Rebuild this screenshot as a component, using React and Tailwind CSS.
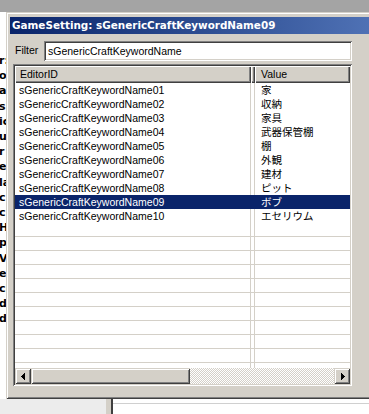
import React from "react";

const rows = [
  { id: "sGenericCraftKeywordName01", value: "家" },
  { id: "sGenericCraftKeywordName02", value: "収納" },
  { id: "sGenericCraftKeywordName03", value: "家具" },
  { id: "sGenericCraftKeywordName04", value: "武器保管棚" },
  { id: "sGenericCraftKeywordName05", value: "棚" },
  { id: "sGenericCraftKeywordName06", value: "外観" },
  { id: "sGenericCraftKeywordName07", value: "建材" },
  { id: "sGenericCraftKeywordName08", value: "ピット" },
  { id: "sGenericCraftKeywordName09", value: "ボブ", selected: true },
  { id: "sGenericCraftKeywordName10", value: "エセリウム" },
];

const sideLetters = ["r:", "o", "a", "s", "ic", "u", "r", "e", "la", "c", "c", "H", "p", "V", "e", "ci", "d", "d"];

const raised =
  "shadow-[inset_1px_1px_0_#d4d0c8,inset_-1px_-1px_0_#404040,inset_2px_2px_0_#ffffff,inset_-2px_-2px_0_#808080]";
const sunken =
  "shadow-[inset_1px_1px_0_#808080,inset_-1px_-1px_0_#ffffff,inset_2px_2px_0_#404040,inset_-2px_-2px_0_#d4d0c8]";
const headerCell =
  "shadow-[inset_1px_1px_0_#ffffff,inset_-1px_-1px_0_#404040,inset_-2px_-2px_0_#808080]";

const ArrowLeft = () => (
  <svg width="4" height="7" viewBox="0 0 4 7" shapeRendering="crispEdges">
    <path d="M3 0h1v7h-1zM2 1h1v5h-1zM1 2h1v3h-1zM0 3h1v1h-1z" fill="#000" />
  </svg>
);

const ArrowRight = () => (
  <svg width="4" height="7" viewBox="0 0 4 7" shapeRendering="crispEdges">
    <path d="M0 0h1v7h-1zM1 1h1v5h-1zM2 2h1v3h-1zM3 3h1v1h-1z" fill="#000" />
  </svg>
);

export default function App() {
  return (
    <div className="relative w-[369px] h-[414px] overflow-hidden bg-white font-['Liberation_Sans','Noto_Sans_CJK_JP',Arial,sans-serif]">
      {/* window behind the dialog */}
      <div className="flex flex-col h-full">
        <div className="h-[12px] bg-[#a4a4a4]" />
        <div className="flex-1 bg-white pt-[41px]">
          <div className="flex flex-col font-['DejaVu_Sans',sans-serif] font-bold text-[11px] leading-[15.2px] text-black">
            {sideLetters.map((l, i) => (
              <span key={i} className="-ml-[1px]">
                {l}
              </span>
            ))}
          </div>
        </div>
        <div className="h-[15px] flex">
          <div className="w-[106px] bg-[#ececec]" />
          <div className="w-[5px] bg-[#d4d0c8]" />
          <div className="w-[2px] bg-[#404040]" />
          <div className="flex-1 bg-white pt-[4px]">
            <div className="border-t border-[#d0d0d0]" />
          </div>
        </div>
      </div>

      {/* GameSetting dialog */}
      <div className={`absolute left-[6px] top-[12px] w-[420px] h-[387px] bg-[#d4d0c8] p-[2px] ${raised}`}>
        <div className="pt-[3px] px-[2px]">
          <div className="h-[17px] bg-gradient-to-r from-[#0a246a] to-[#5a7dc0] pl-[2px] text-white font-['DejaVu_Sans',sans-serif] font-bold text-[10.4px] leading-[17px] whitespace-nowrap">
            GameSetting: sGenericCraftKeywordName09
          </div>

          <div className="mt-[7px] flex items-center h-[20px] text-[10.5px] text-black">
            <div className="w-[34px] pl-[5px]">Filter</div>
            <div className={`w-[308px] h-[20px] bg-white pl-[4px] leading-[20px] ${sunken}`}>
              sGenericCraftKeywordName
            </div>
          </div>

          <div className={`mt-[3px] ml-[3px] w-[339px] h-[322px] bg-white p-[2px] flex flex-col ${sunken}`}>
            {/* column header */}
            <div className="flex h-[17px] bg-[#d4d0c8] text-[10.5px] leading-[17px] text-black">
              <div className={`w-[236px] pl-[5px] ${headerCell}`}>EditorID</div>
              <div className={`w-[4px] ${headerCell}`} />
              <div className={`flex-1 pl-[6px] ${headerCell}`}>Value</div>
            </div>

            {/* rows */}
            <div className="flex-1 overflow-hidden text-[10.5px] leading-[14px]">
              {rows.map((r) => (
                <div
                  key={r.id}
                  className={`flex h-[14px] ${r.selected ? "bg-[#0a246a] text-white" : "text-black"}`}
                >
                  <div className={`w-[236px] pl-[4px] border-r ${r.selected ? "border-[#0a246a]" : "border-[#d4d0c8]"}`}>
                    {r.id}
                  </div>
                  <div className={`w-[4px] border-r ${r.selected ? "border-[#0a246a]" : "border-[#d4d0c8]"}`} />
                  <div className="flex-1 pl-[6px] text-[10.5px] font-['Noto_Sans_CJK_JP',sans-serif]">{r.value}</div>
                </div>
              ))}
              {Array.from({ length: 12 }).map((_, i) => (
                <div key={i} className="flex h-[14px] border-b border-[#d4d0c8]">
                  <div className="w-[236px] border-r border-[#d4d0c8]" />
                  <div className="w-[4px] border-r border-[#d4d0c8]" />
                  <div className="flex-1" />
                </div>
              ))}
            </div>

            {/* horizontal scrollbar */}
            <div className="flex h-[16px]">
              <div className={`w-[16px] bg-[#d4d0c8] flex items-center justify-center pr-[1px] ${raised}`}>
                <ArrowLeft />
              </div>
              <div className={`w-[159px] bg-[#d4d0c8] ${raised}`} />
              <div className="flex-1 bg-[repeating-conic-gradient(#d4d0c8_0%_25%,#ffffff_0%_50%)] bg-[length:2px_2px]" />
              <div className={`w-[16px] bg-[#d4d0c8] flex items-center justify-center pl-[1px] ${raised}`}>
                <ArrowRight />
              </div>
            </div>
          </div>
        </div>
      </div>
    </div>
  );
}
